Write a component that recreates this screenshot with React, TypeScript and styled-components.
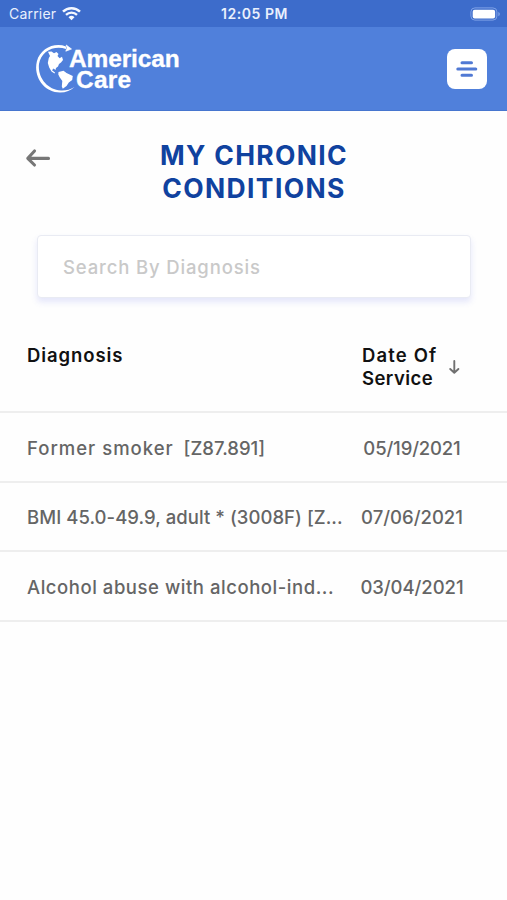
import React from "react";
import styled, { createGlobalStyle } from "styled-components";

const GlobalStyle = createGlobalStyle`
  * { box-sizing: border-box; }
  body { margin: 0; background: #fefefe; font-family: Inter, "Open Sans", sans-serif; }
  button { border: 0; padding: 0; background: none; font: inherit; cursor: pointer; }
`;

const Screen = styled.div`
  display: flex;
  flex-direction: column;
  width: 507px;
  height: 900px;
  overflow: hidden;
  background: #fefefe;
`;

const StatusBar = styled.div`
  display: grid;
  grid-template-columns: 1fr auto 1fr;
  align-items: center;
  height: 27px;
  padding: 0 7px 0 9px;
  background: #3d6ccb;
  color: #e9f0fd;
  font-size: 14px;
  line-height: 27px;
`;

const Carrier = styled.div`
  display: flex;
  align-items: center;
  gap: 6px;
  letter-spacing: 0.2px;
`;

const Clock = styled.div`
  font-weight: 600;
  letter-spacing: 0.55px;
`;

const BatterySlot = styled.div`
  display: flex;
  justify-content: flex-end;
`;

const Header = styled.header`
  display: flex;
  align-items: center;
  justify-content: space-between;
  height: 84px;
  padding: 0 20px 0 35px;
  background: #5080db;
  border-bottom: 1px solid #4776cf;
`;

const Brand = styled.div`
  display: flex;
  align-items: center;
`;

const BrandName = styled.div`
  display: flex;
  flex-direction: column;
  margin-left: -17px;
  color: #fff;
  font: 700 24.5px/21px "Liberation Sans", Arial, sans-serif;
  -webkit-text-stroke: 0.3px #fff;
`;

const BrandLine = styled.span<{ $indent?: number; $track: number }>`
  padding-left: ${(p) => p.$indent ?? 0}px;
  letter-spacing: ${(p) => p.$track}px;
`;

const MenuButton = styled.button`
  display: grid;
  place-items: center;
  width: 40px;
  height: 40px;
  border-radius: 8px;
  background: #fff;
`;

const TitleRow = styled.div`
  display: grid;
  grid-template-columns: 100px 1fr 99px;
  padding-top: 28px;
`;

const BackButton = styled.button`
  display: flex;
  align-self: start;
  margin: 9px 0 0 25px;
`;

const Title = styled.h1`
  display: flex;
  flex-direction: column;
  align-items: center;
  margin: 0;
  color: #10429f;
  font-size: 26.5px;
  font-weight: 700;
  line-height: 32.5px;
`;

const Text = styled.span<{ $track?: number }>`
  letter-spacing: ${(p) => p.$track ?? 0}px;
  white-space: pre;
`;

const SearchInput = styled.input`
  height: 63px;
  margin: 31px 36px 0 37px;
  padding: 0 25px;
  border: 1px solid #e9ebf3;
  border-radius: 4px;
  outline: 0;
  background: #fff;
  box-shadow: 0 4px 6px rgba(80, 95, 225, 0.15);
  color: #666;
  font: 500 18.5px Inter, sans-serif;
  letter-spacing: 0.85px;

  &::placeholder { color: #c9c9c9; opacity: 1; }
`;

const Table = styled.div`
  margin-top: 46px;
  font-size: 18.5px;
`;

const HeadRow = styled.div`
  display: grid;
  grid-template-columns: 335px 86px auto;
  height: 69px;
  padding-left: 27px;
  border-bottom: 2px solid #eeeeee;
  color: #111;
  font-weight: 600;
  line-height: 23px;
`;

const HeadCell = styled.div`
  display: flex;
  flex-direction: column;
`;

const SortArrow = styled.svg`
  margin-top: 15px;
`;

const Row = styled.div`
  display: grid;
  grid-template-columns: 325px 120px;
  align-items: center;
  height: 69.5px;
  padding: 2px 0 0 27px;
  border-bottom: 2px solid #eeeeee;
  color: #656565;
  font-weight: 500;
`;

const NameCell = styled.div`
  white-space: pre;
`;

const DateCell = styled.div`
  text-align: center;
`;

const Globe = () => (
  <svg width="51" height="50" viewBox="0 0 51 50" fill="none">
    <path d="M31 2.400C19-1.900 5.300 4.600 1.900 17.200C-1.900 32.300 8.500 48.300 25 48.500C31 48.500 36 46.500 39.500 43C35.500 45.500 31 46.700 26 46.500C12 45.700 2.500 33 4 20C6 7.500 18.500 1 31 4.900Z" fill="#fff" />
    <path d="M31.200 1L36.500 5L30.800 7.200L32 4Z" fill="#fff" stroke="#fff" strokeWidth=".7" strokeLinejoin="round" />
    <path d="M13 7.800L16.500 7.600L19 9.200L21.500 8L23.500 10L22.500 12L24.600 14.300L27 12.800L28 16L26 18.500L24 20L23 22.500L21 24L20.500 26L18.500 24.600L17 26.200L20 28.500L19.500 29.500L16.500 27.500L14.200 23.500L12.800 19L13.800 14L15 12Z" fill="#fff" />
    <path d="M23.500 28L28.500 26.800L31.500 28.900L37.800 32L37.200 36L33.800 38.500L31.500 42L27.800 44.800L26.800 42.500L27.300 37L24.500 33L23.300 30.500Z" fill="#fff" />
  </svg>
);

const Wifi = () => (
  <svg width="19" height="15" viewBox="0 0 19 15" fill="none" stroke="#f4f8ff">
    <path d="M1 5.600A12.200 12.200 0 0 1 18 5.600" strokeWidth="2.500" />
    <path d="M4 8.900A7.900 7.900 0 0 1 15 8.900" strokeWidth="2.300" />
    <path d="M9.500 14.200L6.500 11.300A4.300 4.300 0 0 1 12.500 11.300Z" fill="#f4f8ff" stroke="none" />
  </svg>
);

const Battery = () => (
  <svg width="30" height="14" viewBox="0 0 30 14" fill="none">
    <rect x=".9" y=".9" width="26" height="12.200" rx="4" stroke="#7fa2e6" />
    <rect x="2.700" y="2.700" width="22.400" height="8.800" rx="2" fill="#fff" />
    <path d="M28.300 5V9.200C29.600 8.600 29.800 7.700 29.800 7C29.800 6.300 29.600 5.500 28.300 5Z" fill="#7fa2e6" />
  </svg>
);

const records = [
  { name: "Former smoker", track: 1, code: "  [Z87.891]", date: "05/19/2021", dateTrack: -0.15 },
  { name: "BMI 45.0-49.9, adult * (3008F) [Z...", track: 0.05, code: "", date: "07/06/2021", dateTrack: 0 },
  { name: "Alcohol abuse with alcohol-ind...", track: 0.54, code: "", date: "03/04/2021", dateTrack: -0.05 },
];

export default function App() {
  return (
    <Screen>
      <GlobalStyle />
      <StatusBar>
        <Carrier>Carrier<Wifi /></Carrier>
        <Clock>12:05 PM</Clock>
        <BatterySlot><Battery /></BatterySlot>
      </StatusBar>
      <Header>
        <Brand>
          <Globe />
          <BrandName>
            <BrandLine $track={-0.15}>American</BrandLine>
            <BrandLine $indent={7} $track={0.2}>Care</BrandLine>
          </BrandName>
        </Brand>
        <MenuButton aria-label="Menu">
          <svg width="22" height="18" viewBox="0 0 22 18" stroke="#5079d4" strokeWidth="3" strokeLinecap="round">
            <path d="M6 2.700H15.500M1.800 9H19.800M6 15.200H15.500" />
          </svg>
        </MenuButton>
      </Header>
      <TitleRow>
        <BackButton aria-label="Back">
          <svg width="26" height="20" viewBox="0 0 26 20" fill="none" stroke="#777" strokeWidth="3.100" strokeLinecap="round" strokeLinejoin="round">
            <path d="M9.500 3L2.800 10.300L9.500 17M3.500 10.400H23.500" />
          </svg>
        </BackButton>
        <Title>
          <Text $track={1.3}>MY CHRONIC</Text>
          <Text $track={1.35}>CONDITIONS</Text>
        </Title>
      </TitleRow>
      <SearchInput placeholder="Search By Diagnosis" />
      <Table>
        <HeadRow>
          <HeadCell><Text $track={0.9}>Diagnosis</Text></HeadCell>
          <HeadCell>
            <Text $track={1.15}>Date Of</Text>
            <Text $track={0.45}>Service</Text>
          </HeadCell>
          <SortArrow width="12" height="16" viewBox="0 0 12 16" fill="none" stroke="#707070" strokeWidth="1.900" strokeLinecap="round" strokeLinejoin="round">
            <path d="M6.300 2V13.600M2.200 10L6.300 13.800L10.400 10" />
          </SortArrow>
        </HeadRow>
        {records.map((r) => (
          <Row key={r.date}>
            <NameCell><Text $track={r.track}>{r.name}</Text>{r.code}</NameCell>
            <DateCell><Text $track={r.dateTrack}>{r.date}</Text></DateCell>
          </Row>
        ))}
      </Table>
    </Screen>
  );
}
